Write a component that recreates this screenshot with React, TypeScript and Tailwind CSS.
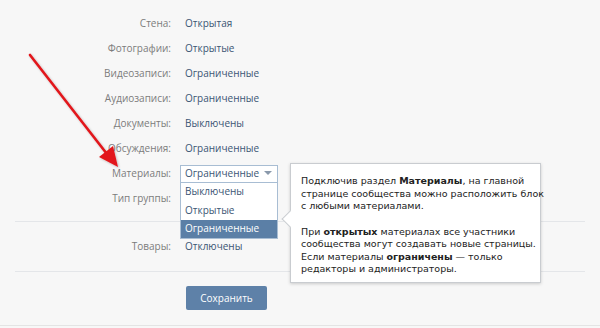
import React from "react";

const rows: [string, string][] = [
  ["Стена:", "Открытая"],
  ["Фотографии:", "Открытые"],
  ["Видеозаписи:", "Ограниченные"],
  ["Аудиозаписи:", "Ограниченные"],
  ["Документы:", "Выключены"],
  ["Обсуждения:", "Ограниченные"],
  ["Материалы:", ""],
  ["Тип группы:", ""],
];

function Row({ label, value, children }: { label: string; value?: string; children?: React.ReactNode }) {
  return (
    <div className="flex h-[25px] items-center">
      <div className="w-[171px] text-right text-[#7c7c7c]">{label}</div>
      <div className="relative ml-[14px] flex-1 text-[#3b5574]">
        {value}
        {children}
      </div>
    </div>
  );
}

export default function App() {
  return (
    <div
      className="relative h-[328px] w-[600px] overflow-hidden bg-[#f7f7f7] text-[10px]"
      style={{ fontFamily: '"Open Sans", "Noto Sans", sans-serif' }}
    >
      <div className="pt-[11px]">
        {rows.map(([l, v], i) => (
          <Row key={l} label={l} value={v}>
            {i === 6 && (
              <div className="absolute left-[-5px] top-[-9px] z-10 w-[98px]">
                <div className="flex h-[18px] items-center justify-between border border-[#a8bdd3] bg-white pl-[4px] pr-[5px] text-[#3b5574]">
                  <span>Ограниченные</span>
                  <svg width="8" height="5" viewBox="0 0 8 5">
                    <path d="M0 0 L8 0 L4 4 Z" fill="#8a99ab" />
                  </svg>
                </div>
                <div className="border border-t-0 border-[#a8bdd3] bg-white text-[#3b5574]">
                  <div className="flex h-[18px] items-center pl-[4px]">Выключены</div>
                  <div className="flex h-[19px] items-center pl-[4px]">Открытые</div>
                  <div className="flex h-[18px] items-center bg-[#5b7fa6] pl-[4px] text-white">Ограниченные</div>
                </div>
              </div>
            )}
          </Row>
        ))}
        <div className="mx-[15px] mt-[10px] h-px bg-[#e4e6e9]" />
        <div className="mt-[12px]">
          <Row label="Товары:" value="Отключены" />
        </div>
        <div className="mx-[15px] mt-[12px] h-px bg-[#e4e6e9]" />
        <div className="mt-[14px] pl-[186px]">
          <button className="flex h-[24px] w-[81px] items-center justify-center rounded-[2px] bg-[#5e81a8] text-[10px] text-white">
            Сохранить
          </button>
        </div>
      </div>
      <div className="absolute bottom-[2px] left-0 h-px w-full bg-[#e4e4e4]" />

      {/* tooltip */}
      <div
        className="absolute left-[290px] top-[163px] z-20 h-[120px] w-[251px] whitespace-nowrap border border-[#c9ccd0] bg-white pl-[10px] pt-[11px] text-[9.5px] leading-[12.5px] text-[#222] shadow-[0_1px_3px_rgba(0,0,0,0.18)]"
        style={{ fontFamily: '"DejaVu Sans", Verdana, sans-serif' }}
      >
        <div className="absolute left-[-7px] top-[49px] h-[12px] w-[12px] rotate-45 border-b border-l border-[#c9ccd0] bg-white" />
        <p className="relative">
          Подключив раздел <b>Материалы</b>, на главной
          <br />
          странице сообщества можно расположить блок
          <br />с любыми материалами.
        </p>
        <p className="relative mt-[13px]">
          При <b>открытых</b> материалах все участники
          <br />
          сообщества могут создавать новые страницы.
          <br />
          Если материалы <b>ограничены</b> — только
          <br />
          редакторы и администраторы.
        </p>
      </div>

      {/* red arrow */}
      <svg className="absolute left-0 top-0 z-30" width="140" height="180" viewBox="0 0 140 180">
        <defs>
          <filter id="sh" x="-20%" y="-20%" width="140%" height="140%">
            <feDropShadow dx="1" dy="1" stdDeviation="1" floodColor="#000" floodOpacity="0.25" />
          </filter>
        </defs>
        <g filter="url(#sh)">
          <line x1="30" y1="55" x2="107" y2="154" stroke="#e2191b" strokeWidth="2.6" strokeLinecap="round" />
          <path d="M118 167 L99 157 L113 146 Z" fill="#e2191b" />
        </g>
      </svg>
    </div>
  );
}
